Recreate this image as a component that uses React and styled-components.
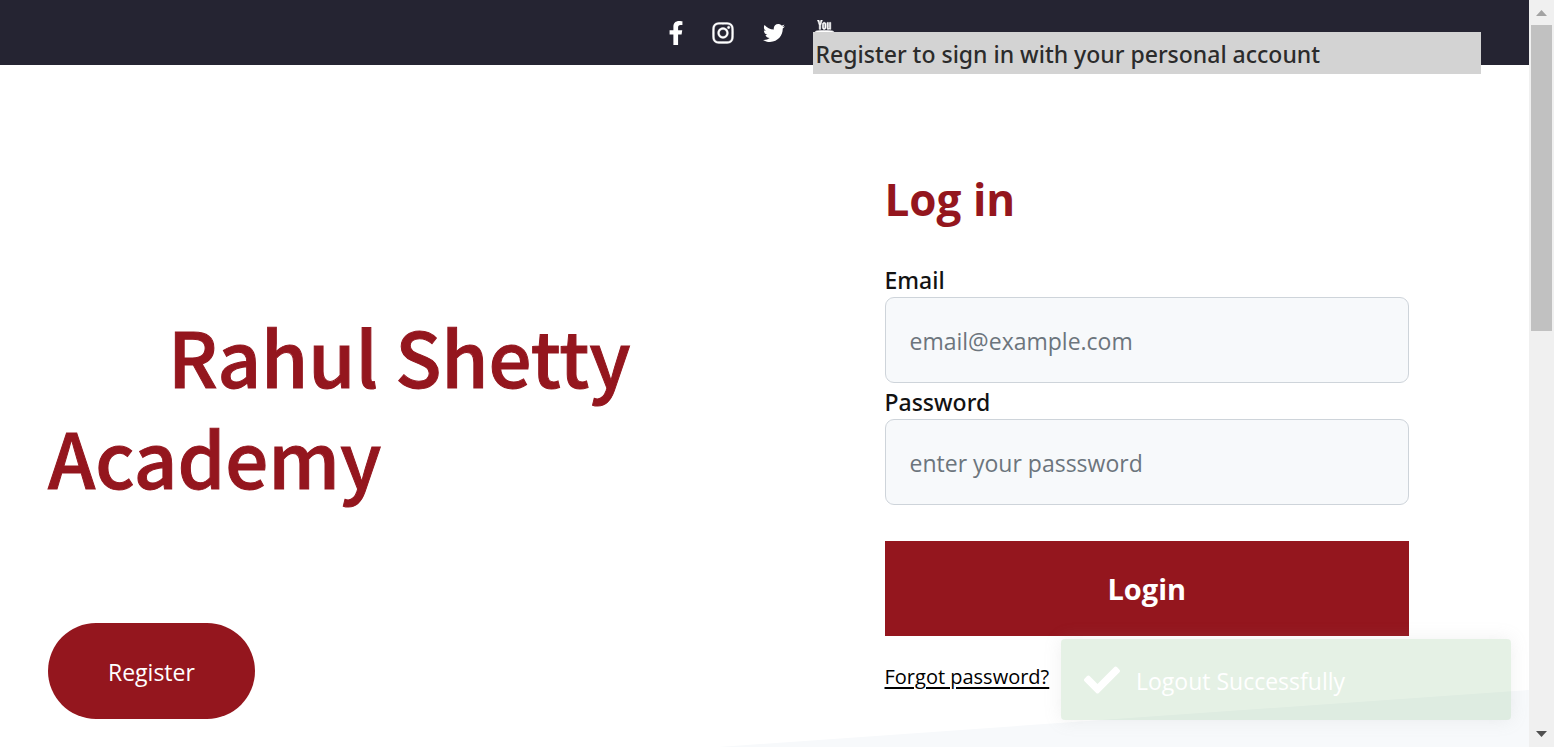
import React from "react";
import styled, { createGlobalStyle } from "styled-components";
import { FaFacebookF, FaInstagram, FaTwitter, FaCheck } from "react-icons/fa";
import { TfiYoutube } from "react-icons/tfi";

const brand = "#94161e";
const sans = '"Open Sans", "Noto Sans", sans-serif';
const sansStrong = '"Noto Sans", "Open Sans", sans-serif';

const GlobalStyle = createGlobalStyle`
  *, *::before, *::after { box-sizing: border-box; }
  body {
    margin: 0;
    background: #fff;
    color: #121212;
    font-family: ${sans};
    font-size: 23px;
    line-height: 36px;
  }
  h1, h2 { margin: 0; }
  button, input { font: inherit; }
`;

const Shell = styled.div`
  display: grid;
  grid-template-columns: minmax(0, 1fr) 25px;
  height: 100vh;
  overflow: hidden;
`;

const Page = styled.div`
  position: relative;
  display: flex;
  flex-direction: column;
  overflow: hidden;
`;

const TopBar = styled.header`
  flex: none;
  display: flex;
  align-items: center;
  justify-content: center;
  height: 65px;
  padding-left: 4px;
  background: #252432;
`;

const SocialLink = styled.a`
  display: flex;
  justify-content: center;
  width: ${(p) => (p.$narrow ? 14 : 22)}px;
  margin-right: 29px;
  color: #fff;
  font-size: ${(p) => p.$size}px;
  svg {
    flex: none;
    stroke-width: ${(p) => p.$stroke || 0};
  }
`;

const Wedge = styled.div`
  position: absolute;
  right: 0;
  bottom: 0;
  width: 53%;
  height: 57px;
  background: #f7f9fb;
  clip-path: polygon(0 100%, 100% 0, 100% 100%);
`;

const Main = styled.main`
  position: relative;
  display: grid;
  grid-template-columns: 1fr 1fr;
`;

const Hero = styled.section`
  padding: 240px 48px 0;
`;

const HeroTitle = styled.h1`
  color: ${brand};
  font-family: "Noto Sans CJK SC", sans-serif;
  font-size: 76px;
  font-weight: 500;
  line-height: 101px;
  text-indent: 120px;
  -webkit-text-stroke: 1px ${brand};
`;

const RegisterButton = styled.button`
  height: 96px;
  margin-top: 116px;
  padding: 2px 60px 0;
  border: 0;
  border-radius: 48px;
  background: ${brand};
  color: #fff;
`;

const LoginPanel = styled.section`
  position: relative;
  padding: 104px 120px 0;
`;

const Tooltip = styled.div`
  position: absolute;
  top: -33px;
  left: 48px;
  right: 48px;
  height: 42px;
  padding: 4px 3px;
  background: #d3d3d3;
  color: #2b2b2b;
  font-family: ${sansStrong};
  font-weight: 500;
`;

const LoginForm = styled.form`
  display: flex;
  flex-direction: column;
`;

const LoginTitle = styled.h2`
  margin-bottom: 32px;
  color: ${brand};
  font-size: 44px;
  font-weight: 700;
  line-height: 60px;
`;

const FieldLabel = styled.label`
  padding-top: 2px;
  font-family: ${sansStrong};
  font-weight: 500;
  line-height: 34px;
`;

const TextField = styled.input`
  width: 100%;
  height: 86px;
  padding: 2px 24px 0;
  border: 1px solid #ced4da;
  border-radius: 9px;
  background: #f7f9fb;
  color: #121212;
  &::placeholder { color: #6c757d; opacity: 1; }
`;

const LoginButton = styled.button`
  height: 95px;
  margin-top: 36px;
  border: 0;
  background: ${brand};
  color: #fff;
  font-size: 29px;
  font-weight: 700;
`;

const ForgotLink = styled.a`
  align-self: flex-start;
  margin-top: 23px;
  color: #000;
  font-size: 20px;
  text-decoration-thickness: 2px;
  text-underline-offset: 3px;
`;

const Toast = styled.div`
  position: absolute;
  right: 18px;
  bottom: 27px;
  display: flex;
  align-items: center;
  gap: 16px;
  width: 450px;
  height: 81px;
  padding: 0 23px;
  border-radius: 4px;
  background: rgba(81, 163, 81, 0.15);
  box-shadow: 0 0 18px rgba(153, 153, 153, 0.15);
  color: #fff;
  svg { font-size: 36px; }
`;

const ToastText = styled.span`
  padding-top: 2px;
`;

const ScrollTrack = styled.div`
  display: flex;
  flex-direction: column;
  align-items: center;
  background: #f0f0f0;
`;

const ScrollArrow = styled.svg`
  flex: none;
  width: 25px;
  height: 25px;
  fill: ${(p) => p.$tone};
`;

const ScrollThumb = styled.div`
  width: 21px;
  height: 41%;
  margin-bottom: auto;
  background: #c1c1c1;
`;

const socials = [
  { name: "Facebook", Icon: FaFacebookF, size: 24, narrow: true },
  { name: "Instagram", Icon: FaInstagram, size: 24, stroke: 8 },
  { name: "Twitter", Icon: FaTwitter, size: 22 },
  { name: "YouTube", Icon: TfiYoutube, size: 25, stroke: 0.4 },
];

export default function App() {
  return (
    <Shell>
      <GlobalStyle />
      <Page>
        <TopBar>
          {socials.map(({ name, Icon, size, narrow, stroke }) => (
            <SocialLink
              key={name}
              href="#"
              aria-label={name}
              $narrow={narrow}
              $size={size}
              $stroke={stroke}
            >
              <Icon />
            </SocialLink>
          ))}
        </TopBar>
        <Wedge />
        <Main>
          <Hero>
            <HeroTitle>Rahul Shetty Academy</HeroTitle>
            <RegisterButton type="button">Register</RegisterButton>
          </Hero>
          <LoginPanel>
            <Tooltip>Register to sign in with your personal account</Tooltip>
            <LoginForm>
              <LoginTitle>Log in</LoginTitle>
              <FieldLabel htmlFor="email">Email</FieldLabel>
              <TextField id="email" type="email" placeholder="email@example.com" />
              <FieldLabel htmlFor="password">Password</FieldLabel>
              <TextField id="password" type="password" placeholder="enter your passsword" />
              <LoginButton type="button">Login</LoginButton>
              <ForgotLink href="#">Forgot password?</ForgotLink>
            </LoginForm>
          </LoginPanel>
        </Main>
        <Toast role="status">
          <FaCheck />
          <ToastText>Logout Successfully</ToastText>
        </Toast>
      </Page>
      <ScrollTrack aria-hidden="true">
        <ScrollArrow $tone="#a3a3a3" viewBox="0 0 25 25">
          <path d="M7 16L12.500 10L18 16Z" />
        </ScrollArrow>
        <ScrollThumb />
        <ScrollArrow $tone="#505050" viewBox="0 0 25 25">
          <path d="M7 9L12.500 15L18 9Z" />
        </ScrollArrow>
      </ScrollTrack>
    </Shell>
  );
}
